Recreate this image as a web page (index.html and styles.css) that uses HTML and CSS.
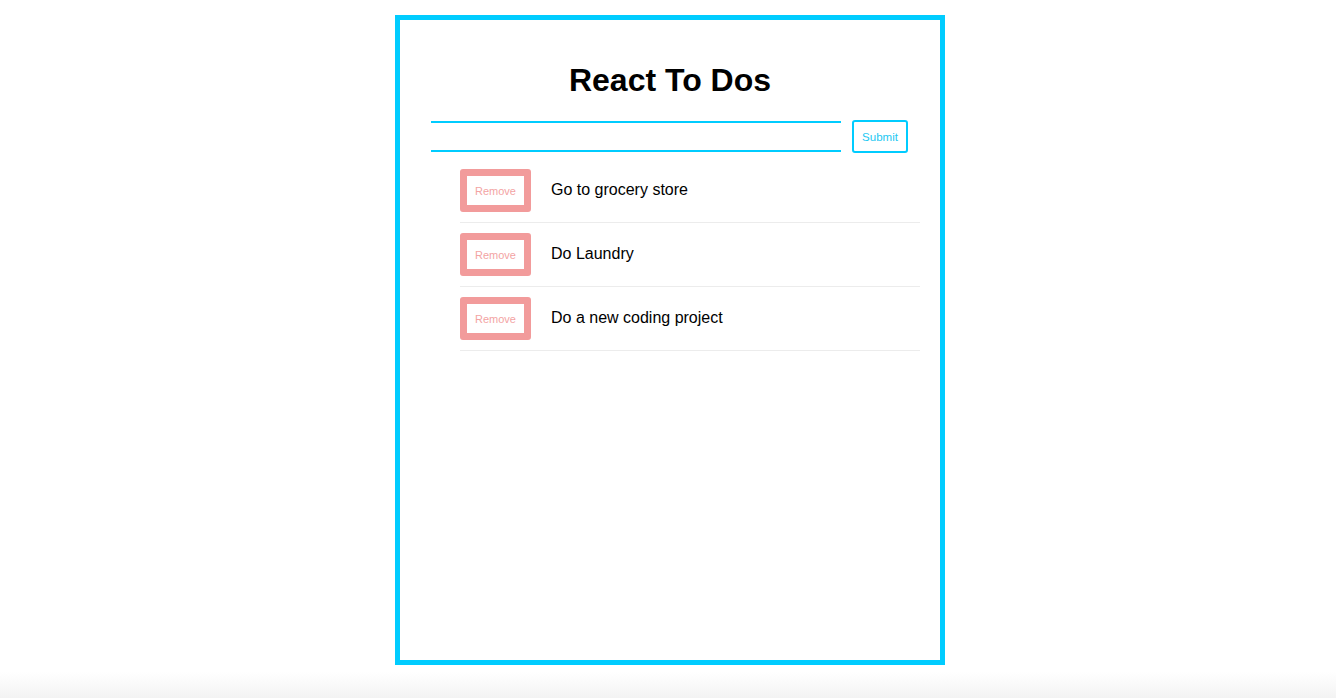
FILE: index.html
```html
<!DOCTYPE html>
<html>
<head>
<meta charset="utf-8">
<title>React To Dos</title>
<link rel="stylesheet" href="styles.css">
</head>
<body>
<div class="app">
  <h1 class="title">React To Dos</h1>
  <form class="todo-form">
    <input class="todo-input" type="text">
    <button class="submit-btn" type="button">Submit</button>
  </form>
  <ul class="todo-list">
    <li class="todo-item"><button class="remove-btn" type="button">Remove</button><span class="todo-text">Go to grocery store</span></li>
    <li class="todo-item"><button class="remove-btn" type="button">Remove</button><span class="todo-text">Do Laundry</span></li>
    <li class="todo-item"><button class="remove-btn" type="button">Remove</button><span class="todo-text">Do a new coding project</span></li>
  </ul>
</div>
</body>
</html>
```

FILE: styles.css
```css
html {
  height: 100%;
  background: linear-gradient(to bottom, #ffffff 0, #ffffff 672px, #f3f3f3 698px);
}
body {
  margin: 0;
  padding-top: 15px;
  font-family: "Liberation Sans", Arial, Helvetica, sans-serif;
  color: #000;
}
.app {
  box-sizing: border-box;
  width: 550px;
  height: 650px;
  margin-left: calc(50% - 273px);
  border: 5px solid #00ccff;
  padding: 20px;
  background: #fff;
}
.title {
  margin: 22px 0 0;
  font-size: 32px;
  line-height: 37px;
  font-weight: bold;
  text-align: center;
}
.todo-form {
  display: flex;
  justify-content: flex-start;
  align-items: center;
  gap: 11px;
  margin-top: 21px;
  padding-left: 11px;
}
.todo-input {
  box-sizing: border-box;
  width: 410px;
  height: 31px;
  margin: 0;
  border: 0;
  border-top: 2px solid #00ccff;
  border-bottom: 2px solid #00ccff;
  outline: none;
  background: transparent;
}
.submit-btn {
  box-sizing: border-box;
  width: 56px;
  height: 33px;
  margin: 0;
  padding: 0;
  border: 2px solid #00ccff;
  border-radius: 3px;
  background: #fff;
  color: #22c8f2;
  font-family: "Liberation Sans", Arial, sans-serif;
  font-size: 11.5px;
}
.todo-list {
  list-style: none;
  margin: 6px 0 0;
  padding: 0 0 0 40px;
}
.todo-item {
  display: flex;
  align-items: center;
  gap: 20px;
  padding: 10px 0;
  border-bottom: 1px solid #ececec;
}
.remove-btn {
  box-sizing: border-box;
  width: 71px;
  height: 43px;
  margin: 0;
  padding: 0;
  border: 7px solid #f29b9b;
  border-radius: 3px;
  background: #fff;
  color: #f3a3a3;
  font-family: "Liberation Sans", Arial, sans-serif;
  font-size: 11px;
}
.todo-text {
  font-size: 16px;
  line-height: 20px;
  margin-top: -2px;
}
```
